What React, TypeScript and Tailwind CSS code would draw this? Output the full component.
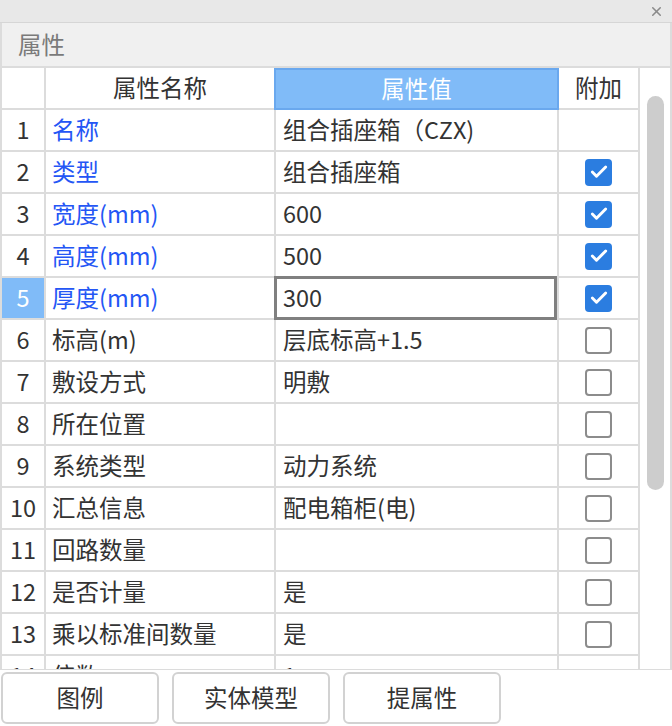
import { Check, X } from 'lucide-react';

type Row = { name: string; value: string; blue?: boolean; add: boolean | null };

const rows: Row[] = [
  { name: '名称', value: '组合插座箱（CZX)', blue: true, add: null },
  { name: '类型', value: '组合插座箱', blue: true, add: true },
  { name: '宽度(mm)', value: '600', blue: true, add: true },
  { name: '高度(mm)', value: '500', blue: true, add: true },
  { name: '厚度(mm)', value: '300', blue: true, add: true },
  { name: '标高(m)', value: '层底标高+1.5', add: false },
  { name: '敷设方式', value: '明敷', add: false },
  { name: '所在位置', value: '', add: false },
  { name: '系统类型', value: '动力系统', add: false },
  { name: '汇总信息', value: '配电箱柜(电)', add: false },
  { name: '回路数量', value: '', add: false },
  { name: '是否计量', value: '是', add: false },
  { name: '乘以标准间数量', value: '是', add: false },
  { name: '倍数', value: '1', add: null },
];

const SELECTED = 5;

function Box({ checked }: { checked: boolean }) {
  if (checked) {
    return (
      <div className="w-[27px] h-[27px] rounded-[4px] bg-[#2b7de0] flex items-center justify-center">
        <Check className="w-[20px] h-[20px] text-white" strokeWidth={3.5} />
      </div>
    );
  }
  return <div className="w-[27px] h-[27px] rounded-[4px] border-2 border-[#8c8c8c] bg-white" />;
}

export default function App() {
  return (
    <div
      className="w-[672px] h-[726px] bg-white flex flex-col overflow-hidden text-[23.5px] text-[#333]"
      style={{ fontFamily: '"Noto Sans CJK SC", "Noto Sans", sans-serif' }}
    >
      {/* Window bar */}
      <div className="h-[23px] shrink-0 bg-[#e8e8e8] border-b border-[#d6d6d6] flex items-center justify-end pr-[8px]">
        <X className="w-[15px] h-[15px] text-[#8a8a8a]" strokeWidth={2.5} />
      </div>

      <div className="h-[647px] shrink-0 border-x-2 border-b border-[#dcdcdc] flex flex-col overflow-hidden">
        {/* Title */}
        <div className="h-[45px] shrink-0 bg-[#f0f0f0] border-b-2 border-[#dcdcdc] flex items-center pl-[16px] text-[#7a7a7a]">
          属性
        </div>

        <div className="flex flex-1 overflow-hidden">
          {/* Table */}
          <div className="w-[638px] shrink-0 bg-[#dcdcdc] pr-[2px] grid grid-cols-[42px_228px_281px_79px] auto-rows-[40px] gap-[2px] content-start">
            <div className="bg-white" />
            <div className="bg-white flex items-center justify-center">属性名称</div>
            <div className="relative bg-white">
              <div className="absolute -left-[2px] -right-[2px] top-0 -bottom-[2px] border-2 border-[#6aa8ee] bg-[#80bbf8] flex items-center justify-center text-white">
                属性值
              </div>
            </div>
            <div className="bg-white flex items-center justify-center">附加</div>

            {rows.map((r, i) => {
              const n = i + 1;
              const sel = n === SELECTED;
              return [
                <div
                  key={`n${n}`}
                  className={
                    sel
                      ? 'relative bg-[#80bbf8] flex items-center justify-center text-white'
                      : 'bg-white flex items-center justify-center'
                  }
                >
                  {n}
                </div>,
                <div
                  key={`a${n}`}
                  className={`bg-white flex items-center pl-[6px] whitespace-nowrap ${r.blue ? 'text-[#2456f5]' : ''}`}
                >
                  {r.name}
                </div>,
                <div key={`v${n}`} className="relative bg-white flex items-center pl-[7px] whitespace-nowrap">
                  {sel && <div className="absolute -left-[2px] -top-[2px] right-0 -bottom-[2px] border-[3px] border-[#808080]" />}
                  <span className="relative">{r.value}</span>
                </div>,
                <div key={`c${n}`} className="bg-white flex items-center justify-center">
                  {r.add !== null && n < 14 && <Box checked={r.add} />}
                </div>,
              ];
            })}
          </div>

          {/* Scrollbar */}
          <div className="flex-1 bg-white pt-[28px] pl-[7px]">
            <div className="w-[17px] h-[394px] rounded-full bg-[#cdcdcd]" />
          </div>
        </div>
      </div>

      {/* Buttons */}
      <div className="flex gap-[13px] pl-[1px] pt-[2px]">
        <button className="w-[158px] h-[52px] rounded-[6px] border-2 border-[#d2d2d2] bg-white flex items-center justify-center">
          图例
        </button>
        <button className="w-[158px] h-[52px] rounded-[6px] border-2 border-[#d2d2d2] bg-white flex items-center justify-center">
          实体模型
        </button>
        <button className="w-[158px] h-[52px] rounded-[6px] border-2 border-[#d2d2d2] bg-white flex items-center justify-center">
          提属性
        </button>
      </div>
    </div>
  );
}
